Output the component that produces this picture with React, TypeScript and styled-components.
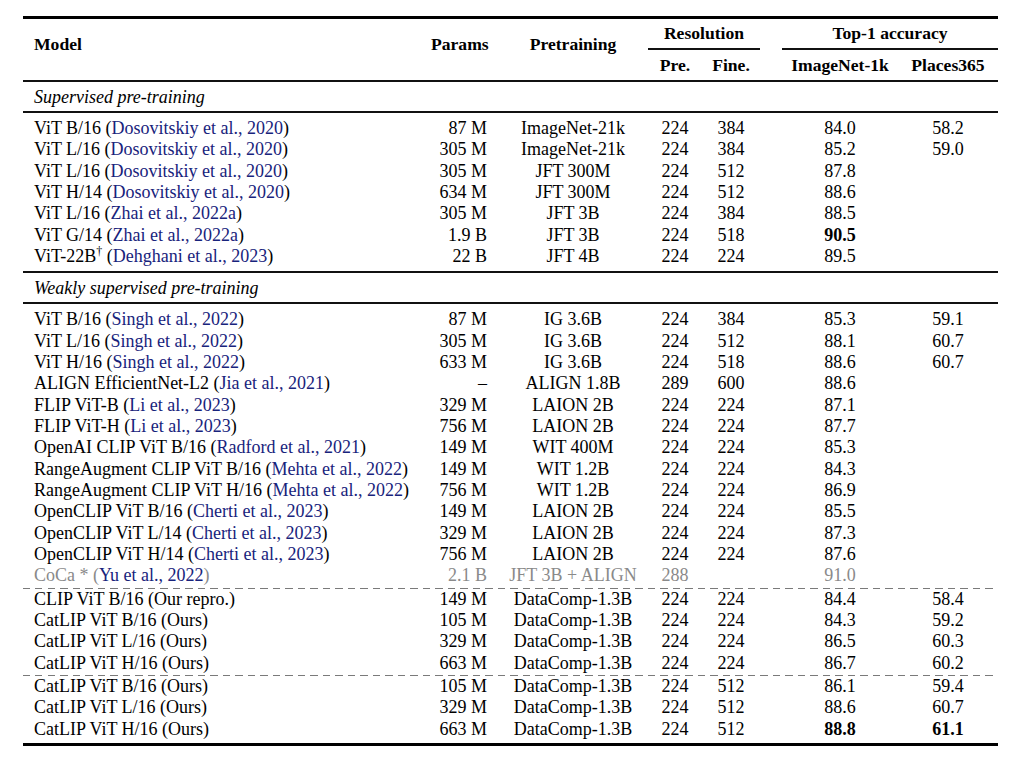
import React from "react";
import styled, { createGlobalStyle } from "styled-components";

const GlobalStyle = createGlobalStyle`
  body {
    margin: 0;
    background: #ffffff;
  }
`;

const columns = "397px 78px 150px 54px 58px 22px 116px 100px";
const rowHeight = "21.33px";
const citeColor = "#18237c";

interface Entry {
  model: string;
  cite?: string;
  mark?: string;
  params: string;
  data: string;
  pre: string;
  fine: string;
  in1k: string;
  places?: string;
  bestIn1k?: boolean;
  bestPlaces?: boolean;
  muted?: boolean;
}

const supervised: Entry[] = [
  { model: "ViT B/16", cite: "Dosovitskiy et al., 2020", params: "87 M", data: "ImageNet-21k", pre: "224", fine: "384", in1k: "84.0", places: "58.2" },
  { model: "ViT L/16", cite: "Dosovitskiy et al., 2020", params: "305 M", data: "ImageNet-21k", pre: "224", fine: "384", in1k: "85.2", places: "59.0" },
  { model: "ViT L/16", cite: "Dosovitskiy et al., 2020", params: "305 M", data: "JFT 300M", pre: "224", fine: "512", in1k: "87.8" },
  { model: "ViT H/14", cite: "Dosovitskiy et al., 2020", params: "634 M", data: "JFT 300M", pre: "224", fine: "512", in1k: "88.6" },
  { model: "ViT L/16", cite: "Zhai et al., 2022a", params: "305 M", data: "JFT 3B", pre: "224", fine: "384", in1k: "88.5" },
  { model: "ViT G/14", cite: "Zhai et al., 2022a", params: "1.9 B", data: "JFT 3B", pre: "224", fine: "518", in1k: "90.5", bestIn1k: true },
  { model: "ViT-22B", mark: "†", cite: "Dehghani et al., 2023", params: "22 B", data: "JFT 4B", pre: "224", fine: "224", in1k: "89.5" }
];

const weakly: Entry[] = [
  { model: "ViT B/16", cite: "Singh et al., 2022", params: "87 M", data: "IG 3.6B", pre: "224", fine: "384", in1k: "85.3", places: "59.1" },
  { model: "ViT L/16", cite: "Singh et al., 2022", params: "305 M", data: "IG 3.6B", pre: "224", fine: "512", in1k: "88.1", places: "60.7" },
  { model: "ViT H/16", cite: "Singh et al., 2022", params: "633 M", data: "IG 3.6B", pre: "224", fine: "518", in1k: "88.6", places: "60.7" },
  { model: "ALIGN EfficientNet-L2", cite: "Jia et al., 2021", params: "–", data: "ALIGN 1.8B", pre: "289", fine: "600", in1k: "88.6" },
  { model: "FLIP ViT-B", cite: "Li et al., 2023", params: "329 M", data: "LAION 2B", pre: "224", fine: "224", in1k: "87.1" },
  { model: "FLIP ViT-H", cite: "Li et al., 2023", params: "756 M", data: "LAION 2B", pre: "224", fine: "224", in1k: "87.7" },
  { model: "OpenAI CLIP ViT B/16", cite: "Radford et al., 2021", params: "149 M", data: "WIT 400M", pre: "224", fine: "224", in1k: "85.3" },
  { model: "RangeAugment CLIP ViT B/16", cite: "Mehta et al., 2022", params: "149 M", data: "WIT 1.2B", pre: "224", fine: "224", in1k: "84.3" },
  { model: "RangeAugment CLIP ViT H/16", cite: "Mehta et al., 2022", params: "756 M", data: "WIT 1.2B", pre: "224", fine: "224", in1k: "86.9" },
  { model: "OpenCLIP ViT B/16", cite: "Cherti et al., 2023", params: "149 M", data: "LAION 2B", pre: "224", fine: "224", in1k: "85.5" },
  { model: "OpenCLIP ViT L/14", cite: "Cherti et al., 2023", params: "329 M", data: "LAION 2B", pre: "224", fine: "224", in1k: "87.3" },
  { model: "OpenCLIP ViT H/14", cite: "Cherti et al., 2023", params: "756 M", data: "LAION 2B", pre: "224", fine: "224", in1k: "87.6" },
  { model: "CoCa *", cite: "Yu et al., 2022", params: "2.1 B", data: "JFT 3B + ALIGN", pre: "288", fine: "", in1k: "91.0", muted: true }
];

const ours224: Entry[] = [
  { model: "CLIP ViT B/16 (Our repro.)", params: "149 M", data: "DataComp-1.3B", pre: "224", fine: "224", in1k: "84.4", places: "58.4" },
  { model: "CatLIP ViT B/16 (Ours)", params: "105 M", data: "DataComp-1.3B", pre: "224", fine: "224", in1k: "84.3", places: "59.2" },
  { model: "CatLIP ViT L/16 (Ours)", params: "329 M", data: "DataComp-1.3B", pre: "224", fine: "224", in1k: "86.5", places: "60.3" },
  { model: "CatLIP ViT H/16 (Ours)", params: "663 M", data: "DataComp-1.3B", pre: "224", fine: "224", in1k: "86.7", places: "60.2" }
];

const ours512: Entry[] = [
  { model: "CatLIP ViT B/16 (Ours)", params: "105 M", data: "DataComp-1.3B", pre: "224", fine: "512", in1k: "86.1", places: "59.4" },
  { model: "CatLIP ViT L/16 (Ours)", params: "329 M", data: "DataComp-1.3B", pre: "224", fine: "512", in1k: "88.6", places: "60.7" },
  { model: "CatLIP ViT H/16 (Ours)", params: "663 M", data: "DataComp-1.3B", pre: "224", fine: "512", in1k: "88.8", places: "61.1", bestIn1k: true, bestPlaces: true }
];

function ResultRow({ entry }: { entry: Entry }) {
  return (
    <Row $muted={entry.muted}>
      <Cell $align="left">
        {entry.model}
        {entry.mark && <Mark>{entry.mark}</Mark>}
        {entry.cite && (
          <>
            {" ("}
            <Cite>{entry.cite}</Cite>
            {")"}
          </>
        )}
      </Cell>
      <Cell $align="right">{entry.params}</Cell>
      <Cell $align="center">{entry.data}</Cell>
      <Cell $align="center">{entry.pre}</Cell>
      <Cell $align="center">{entry.fine}</Cell>
      <Cell $align="center" />
      <Cell $align="center" $bold={entry.bestIn1k}>{entry.in1k}</Cell>
      <Cell $align="center" $bold={entry.bestPlaces}>{entry.places}</Cell>
    </Row>
  );
}

export default function App() {
  return (
    <Page>
      <GlobalStyle />
      <Table>
        <Header>
          <HeadCell $row="1 / 3" $col="1" $align="left">Model</HeadCell>
          <HeadCell $row="1 / 3" $col="2" $align="right">Params</HeadCell>
          <HeadCell $row="1 / 3" $col="3" $align="center">Pretraining</HeadCell>
          <GroupHead $col="4 / 6">Resolution</GroupHead>
          <GroupHead $col="7 / 9">Top-1 accuracy</GroupHead>
          <SubHead $col="4">Pre.</SubHead>
          <SubHead $col="5">Fine.</SubHead>
          <SubHead $col="7">ImageNet-1k</SubHead>
          <SubHead $col="8">Places365</SubHead>
        </Header>

        <SectionTitle>Supervised pre-training</SectionTitle>
        <Group $last={false}>
          {supervised.map((e, i) => (
            <ResultRow key={i} entry={e} />
          ))}
        </Group>

        <SectionTitle>Weakly supervised pre-training</SectionTitle>
        <Group $last>
          {weakly.map((e, i) => (
            <ResultRow key={i} entry={e} />
          ))}
          <Dashed />
          {ours224.map((e, i) => (
            <ResultRow key={i} entry={e} />
          ))}
          <Dashed />
          {ours512.map((e, i) => (
            <ResultRow key={i} entry={e} />
          ))}
        </Group>
      </Table>
    </Page>
  );
}

const Page = styled.div`
  padding: 16px 0 0 23px;
  font-family: "Liberation Serif", "Times New Roman", serif;
  font-size: 18px;
  color: #000;
`;

const Table = styled.div`
  width: 975px;
  border-top: 3px solid #000;
  border-bottom: 3px solid #000;
`;

const Header = styled.div`
  display: grid;
  grid-template-columns: ${columns};
  grid-template-rows: 31px 30px;
  border-bottom: 2px solid #111;
  font-weight: bold;
  font-size: 17.6px;
`;

const HeadCell = styled.div<{ $row: string; $col: string; $align: string }>`
  grid-row: ${p => p.$row};
  grid-column: ${p => p.$col};
  align-self: center;
  text-align: ${p => p.$align};
  padding: 0 11px 11px;
  white-space: nowrap;
`;

const GroupHead = styled.div<{ $col: string }>`
  grid-row: 1;
  grid-column: ${p => p.$col};
  display: flex;
  align-items: center;
  justify-content: center;
  border-bottom: 2px solid #111;
  white-space: nowrap;
`;

const SubHead = styled.div<{ $col: string }>`
  grid-row: 2;
  grid-column: ${p => p.$col};
  display: flex;
  align-items: center;
  justify-content: center;
  white-space: nowrap;
`;

const SectionTitle = styled.div`
  height: 29px;
  line-height: 30px;
  padding-left: 11px;
  font-style: italic;
  border-bottom: 2px solid #111;
`;

const Group = styled.div<{ $last: boolean }>`
  padding: 5px 0 ${p => (p.$last ? "3px" : "4px")};
  border-bottom: ${p => (p.$last ? "none" : "2px solid #111")};
`;

const Row = styled.div<{ $muted?: boolean }>`
  display: grid;
  grid-template-columns: ${columns};
  height: ${rowHeight};
  line-height: ${rowHeight};
  color: ${p => (p.$muted ? "#8a8a8a" : "#000")};
`;

const Cell = styled.div<{ $align: string; $bold?: boolean }>`
  padding: 0 11px;
  text-align: ${p => p.$align};
  font-weight: ${p => (p.$bold ? "bold" : "normal")};
  white-space: nowrap;
`;

const Cite = styled.span`
  color: ${citeColor};
`;

const Mark = styled.sup`
  font-size: 12px;
  line-height: 0;
  vertical-align: 7px;
`;

const Dashed = styled.div`
  height: 1px;
  margin: 1px 0 0;
  background-image: repeating-linear-gradient(
    to right,
    #7a7a7a 0 7px,
    transparent 7px 12.5px
  );
`;
